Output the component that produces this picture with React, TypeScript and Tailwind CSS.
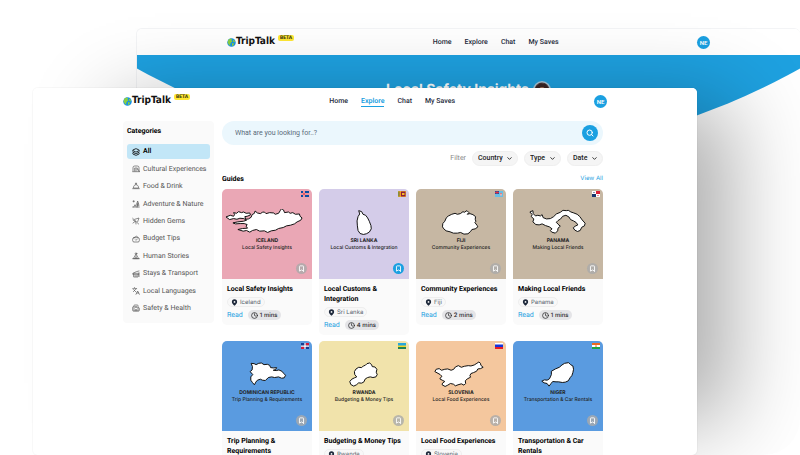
import type { ReactNode } from "react";
import {
  Bookmark,
  ChevronDown,
  Clock,
  Hospital,
  Languages,
  Layers,
  Search,
} from "lucide-react";

const line = {
  viewBox: "0 0 24 24",
  fill: "none",
  stroke: "currentColor",
  strokeWidth: 2,
  strokeLinecap: "round" as const,
  strokeLinejoin: "round" as const,
};

function Drawn({ children }: { children: ReactNode }) {
  return (
    <svg {...line} className="size-2 shrink-0" aria-hidden="true">
      {children}
    </svg>
  );
}

const categories: { name: string; icon: ReactNode }[] = [
  { name: "All", icon: <Layers className="size-2 shrink-0" strokeWidth={2.5} /> },
  {
    name: "Cultural Experiences",
    icon: (
      <Drawn>
        <path d="M3 18V8a5 5 0 0 1 5-5h8a5 5 0 0 1 5 5v10" />
        <path d="M8 18V9h8v6M12 12v6M2 20h20M19 14l3 6" />
      </Drawn>
    ),
  },
  {
    name: "Food & Drink",
    icon: (
      <Drawn>
        <path d="M2 20h20M4 17c0-5 4-9 8-9s8 4 8 9zM12 8V4M10 4h4" />
      </Drawn>
    ),
  },
  {
    name: "Adventure & Nature",
    icon: (
      <Drawn>
        <path d="M2 21h20M3 4h4M5 2v4M5 21l4-7 4 7M17 21V9M14 12l3-9 3 9zM14 16h7" />
      </Drawn>
    ),
  },
  {
    name: "Hidden Gems",
    icon: (
      <Drawn>
        <path d="M2 4l18 17M8 7l13-4-4 11M3 18l8-6 1 9M3 9l5 3" />
      </Drawn>
    ),
  },
  {
    name: "Budget Tips",
    icon: (
      <Drawn>
        <rect x="2" y="8" width="20" height="13" rx="4" />
        <path d="M6 8l8-5 4 5M10 14l2 2 4-4" />
      </Drawn>
    ),
  },
  {
    name: "Human Stories",
    icon: (
      <Drawn>
        <circle cx="12" cy="5" r="2.5" />
        <path d="M11 8L4 20h16L13 8M12 12v4M9 20l3-4 3 4M2 20h20" />
      </Drawn>
    ),
  },
  {
    name: "Stays & Transport",
    icon: (
      <Drawn>
        <path d="M3 10l10-5 8-2M4 10h16v4H4zM5 14v7h13v-7M9 18h5M21 8v12" />
      </Drawn>
    ),
  },
  { name: "Local Languages", icon: <Languages className="size-2 shrink-0" /> },
  { name: "Safety & Health", icon: <Hospital className="size-2 shrink-0" /> },
];

type Guide = {
  country: string;
  title: string;
  mins: number;
  color: string;
  saved?: boolean;
  shift: string;
  outline: string;
  flag: ReactNode;
};

const guides: Guide[] = [
  {
    country: "Iceland",
    title: "Local Safety Insights",
    mins: 1,
    color: "bg-[#eaa7b5]",
    shift: "translate(-12 -15)",
    outline:
      "M24 99l13-5 10 3 3-5-3-6 9 2 6-5 9 3 6-2 8 4 11-1 2 6-10 4-7 1 3 8 8-1 8-5 3-8 7-4 2-7 7 6 9 2 6-4 6-1 5 5 11-3 12 1 5 4 10-3 5-8 4-6 6 4 3 8 12-2 5 4 8-2 8 5 12-1 2 7 6 5-4 7-11 5-8 6-12 4-12 2-10 5-14 3-9 5-13 2-11 5-10-5-14 1-10-5-12 3-8 5-10-5-10 2-16-5 14-3 15-1-4-6 3-5-9-3-12 0-14 1-8-3 14-3 18-2 9-3-8-5-12-1-9 3-10-2-12 3z",
    flag: (
      <>
        <path fill="#0b4ea2" d="M0 0h16v12H0z" />
        <path stroke="#fff" strokeWidth="4" d="M0 6h16M6 0v12" />
        <path stroke="#dc2235" strokeWidth="2" d="M0 6h16M6 0v12" />
      </>
    ),
  },
  {
    country: "Sri Lanka",
    title: "Local Customs & Integration",
    mins: 4,
    color: "bg-[#d4cce9]",
    saved: true,
    shift: "translate(-303 -15)",
    outline:
      "M423 80l9 3 4 8 8 3 6 8 5 10 5 13 1 10-6 10-9 5-9 2-10-3-6-9-2-14-1-15 3-13 5-8z",
    flag: (
      <>
        <path fill="#f5b928" d="M0 0h16v12H0z" />
        <path fill="#176b52" d="M1 1h2v10H1z" />
        <path fill="#e87722" d="M3 1h2v10H3z" />
        <path fill="#8d1b3d" d="M6 1h9v10H6z" />
        <path fill="#f5b928" d="M8 4h5v4H8z" />
      </>
    ),
  },
  {
    country: "Fiji",
    title: "Community Experiences",
    mins: 2,
    color: "bg-[#c6b7a3]",
    shift: "translate(-12 -15)",
    outline:
      "M104 101l6-5 10-5 10-3 7 3 9-2 8-6 4 2 8-5 6 6-5 5 8-2 9 3 8 6-1 8 2 6-3 4 7 9 2 4-8 6-10 2-4 6-8 7-12 1-10-5-10 2-12 0-10-4-12-3-7-6-4-6 1-10 6-7z",
    flag: (
      <>
        <path fill="#68bfe5" d="M0 0h16v12H0z" />
        <path fill="#2a4b9b" d="M0 0h8v6H0z" />
        <path stroke="#d8344b" strokeWidth="2" d="M0 3h8M4 0v6" />
        <path fill="#e8d9d3" d="M10 4h4v5h-4z" />
        <path stroke="#d8344b" d="M10 5h4M12 5v4" />
      </>
    ),
  },
  {
    country: "Panama",
    title: "Making Local Friends",
    mins: 1,
    color: "bg-[#c6b7a3]",
    shift: "translate(-301 -15)",
    outline:
      "M352 84l9-4 1 9 7 7 7-2 8 2 5-4 3 9 10 4 12-1 10-6 8-8 12-5 8-6 10 1 6-1 8 5 9 3 10 4 8 7 7 10 9 10-2 8-8 4-5 10-8 3-8-4-5-7 6-5 8-4-5-7-8-5-9-4-5-8-9-5-10 3-6 8-8 5-5 5 5 6 7 6-7 6-1 8-7 7-11-3-4-5 5-5-8-6-12-4-10-5-9 3-10-1-9-8 3-9-8-7 3-6z",
    flag: (
      <>
        <path fill="#fff" d="M0 0h16v12H0z" />
        <path fill="#dc1f35" d="M8 0h8v6H8z" />
        <path fill="#15346f" d="M0 6h8v6H0zM3 2h2v2H3z" />
        <path fill="#dc1f35" d="M11 8h2v2h-2z" />
      </>
    ),
  },
  {
    country: "Dominican Republic",
    title: "Trip Planning & Requirements",
    mins: 3,
    color: "bg-[#5a9be0]",
    shift: "translate(-12 -15)",
    outline:
      "M100 82l9 1 6 3 8-4 8-1 8 5 10-1 7 3 3 7 9 1 9-1-3 6-7 2 9 1 8-2 9 4 5 6 6 6-4 8-8 1-9-4-12 2-9-2-10 2-9 9-9-1-6-3-9 3-5 6-4 8-6-7-5-7 0-10 6-7-8-9 6-5 1-10z",
    flag: (
      <>
        <path fill="#173b8f" d="M0 0h16v12H0z" />
        <path fill="#d21c3b" d="M9 0h7v5H9zM0 7h7v5H0z" />
        <path stroke="#fff" strokeWidth="2.5" d="M0 6h16M8 0v12" />
      </>
    ),
  },
  {
    country: "Rwanda",
    title: "Budgeting & Money Tips",
    mins: 2,
    color: "bg-[#f1e3ab]",
    shift: "translate(-303 -15)",
    outline:
      "M456 81l6 5 2 6 8 1 6 7-2 9 3 7-4 7-9 2-8-2-8 2-7 4-5 10-7 3-8-1-7 6-8 4-9-5-3-9 6-7 8-4 7-3-6-7-1-9 5-8 8-5 9 1 5-5 6-2 5-5z",
    flag: (
      <>
        <path fill="#27a7dc" d="M0 0h16v6H0z" />
        <path fill="#f4d526" d="M0 5h16v4H0z" />
        <path fill="#218353" d="M0 8h16v4H0z" />
      </>
    ),
  },
  {
    country: "Slovenia",
    title: "Local Food Experiences",
    mins: 2,
    color: "bg-[#f4c79e]",
    shift: "translate(-12 -15)",
    outline:
      "M69 107l4-7 9-2 7 5 10-3 9-1 10 4 8-3 5-7 9-4 9 5 9-3 12-2 8 1 10-3 8-5 6-4 5 4 1 6 7 6-8 4-8 1-4 7-9 4-8 3-3 6 2 5-10 5-6 6 1 8-5 5-8-4-10 3-8 3-6-5-9-2-8 5-8 4-9-5 1-5 7-5-6-3-9-5 6-8-5-5z",
    flag: (
      <>
        <path fill="#fff" d="M0 0h16v4H0z" />
        <path fill="#1534d8" d="M0 3h16v6H0z" />
        <path fill="#e81c24" d="M0 8h16v4H0z" />
      </>
    ),
  },
  {
    country: "Niger",
    title: "Transportation & Car Rentals",
    mins: 3,
    color: "bg-[#5a9be0]",
    shift: "translate(-301 -15)",
    outline:
      "M417 106l12-7 12-5 8-7 8-5 12-2 6 6 7 4 2 10-2 10-3 9-5 6-6 10-9 4-9 1-11-2-8 0-10-1-5 6-6 8-6-8-9-2-7-5 8-4 8 1 7-4 3-6 3-7z",
    flag: (
      <>
        <path fill="#ed6a1f" d="M0 0h16v4H0z" />
        <path fill="#fff" d="M0 4h16v4H0z" />
        <path fill="#1da446" d="M0 8h16v4H0z" />
        <circle cx="8" cy="6" r="1.7" fill="#ed6a1f" />
      </>
    ),
  },
];

function Logo() {
  return (
    <a href="#home" className="flex items-start gap-[3px]">
      <span className="flex items-center">
        <svg viewBox="0 0 18 18" className="size-[9px]" aria-hidden="true">
          <circle cx="9" cy="9" r="8.5" fill="#1592e6" />
          <path
            fill="#8bcf3f"
            d="M3 3l4-2 3 1-1 3 2 2-3 2-2 4 1 3-3-2-3-5zM12 3l4 3-1 3-3-2zM10 10l4 1-1 4-3 1z"
          />
        </svg>
        <span className="font-['DejaVu_Sans_Condensed','DejaVu_Sans',sans-serif] text-[10px] leading-[14px] font-bold text-[#111111]">
          TripTalk
        </span>
      </span>
      <span className="rounded-xs bg-[#ffe733] px-[2px] text-[5px] leading-[6px] font-bold text-[#2b2b10]">
        BETA
      </span>
    </a>
  );
}

function TopBar({ active }: { active?: string }) {
  return (
    <header className="flex h-[26px] shrink-0 items-center justify-between bg-white px-[90px]">
      <Logo />
      <nav className="flex gap-[13px] text-[7px] leading-[10px] font-medium text-[#1f2d3d]">
        {["Home", "Explore", "Chat", "My Saves"].map((item) => (
          <a
            key={item}
            href="#nav"
            className={
              item === active
                ? "border-b border-[#1ba0e1] font-semibold text-[#1ba0e1]"
                : "border-b border-transparent"
            }
          >
            {item}
          </a>
        ))}
      </nav>
      <button className="size-[13px] rounded-full bg-[#1ba0e1] text-center text-[6px] leading-[13px] font-semibold text-white">
        NE
      </button>
    </header>
  );
}

function ArticleWindow() {
  return (
    <section className="col-start-1 row-start-1 mt-7 ml-[17%] overflow-hidden rounded-t-md border-t border-l border-gray-100 bg-white">
      <TopBar />
      <div className="h-25 bg-[#1ea1e0] [clip-path:circle(678px_at_50%_-578px)]">
        <div className="flex items-center justify-center gap-1 pt-[25px]">
          <h1 className="font-['Inter',sans-serif] text-[14px] leading-[20px] font-bold text-white">
            Local Safety Insights
          </h1>
          <svg viewBox="0 0 18 18" className="size-[18px]" aria-hidden="true">
            <circle cx="9" cy="9" r="9" fill="#a9c9dc" />
            <circle cx="9" cy="9" r="7.5" fill="#5d4545" />
            <path fill="#3a2526" d="M3 8q-1-3 2-4 2-3 5-1 3-1 4 2 3 2 0 5H3z" />
            <ellipse cx="9" cy="11" rx="4" ry="5" fill="#a8745d" />
          </svg>
        </div>
      </div>
    </section>
  );
}

function Sidebar() {
  return (
    <aside className="flex h-[202px] w-[91px] shrink-0 flex-col rounded bg-[#fafafa] px-1 pt-[5px] pb-[7px]">
      <h2 className="text-[7px] leading-[10px] font-bold text-black">Categories</h2>
      <ul className="mt-2 flex flex-1 flex-col justify-between">
        {categories.map(({ name, icon }, i) => (
          <li key={name}>
            <a
              href="#category"
              className={
                i === 0
                  ? "flex h-[15px] items-center gap-[3px] rounded-[3px] bg-[#c2e6f7] px-[5px] text-[7px] font-semibold text-black"
                  : "flex h-[15px] items-center gap-[3px] px-[5px] text-[7px] whitespace-nowrap text-[#555555]"
              }
            >
              {icon}
              {name}
            </a>
          </li>
        ))}
      </ul>
    </aside>
  );
}

function Filter({ name }: { name: string }) {
  return (
    <div className="relative flex">
      <select
        aria-label={name}
        className="h-[15px] appearance-none rounded-full border border-[#efefef] bg-[#f5f5f5] pr-[14px] pl-[5px] text-[7px] leading-[9px] font-medium text-[#222222]"
      >
        <option>{name}</option>
      </select>
      <ChevronDown
        className="pointer-events-none absolute top-1 right-[5px] size-[7px] text-[#222222]"
        strokeWidth={3}
      />
    </div>
  );
}

function GuideCard({ guide }: { guide: Guide }) {
  return (
    <article className="overflow-hidden rounded-[5px] bg-[#fafafa]">
      <div
        className={`relative aspect-square pt-5 text-center font-['Inter',sans-serif] text-[5px] leading-[7px] text-[#222222] ${guide.color}`}
      >
        <svg viewBox="0 60 272 84" className="block w-full" aria-hidden="true">
          <path
            d={guide.outline}
            transform={guide.shift}
            fill="#ffffff"
            stroke="#111111"
            strokeWidth="3"
            strokeLinejoin="round"
          />
        </svg>
        <p className="mt-px font-bold uppercase">{guide.country}</p>
        <p className="font-medium whitespace-nowrap">{guide.title}</p>
        <svg viewBox="0 0 16 12" className="absolute top-[2px] right-[3px] h-[6px] w-[8px]" aria-hidden="true">
          {guide.flag}
        </svg>
        <button
          aria-label="Save"
          className={
            guide.saved
              ? "absolute right-[5px] bottom-[5px] flex size-[11px] items-center justify-center rounded-full bg-[#1ba0e1] text-white"
              : "absolute right-[5px] bottom-[5px] flex size-[11px] items-center justify-center rounded-full bg-[#aaaaaa]/80 text-white"
          }
        >
          <Bookmark className="size-[7px]" strokeWidth={3} />
        </button>
      </div>
      <div className="flex flex-col items-start gap-[3px] p-[5px]">
        <h3 className="text-[7px] leading-[10px] font-bold text-black">{guide.title}</h3>
        <p className="flex h-[10px] items-center gap-[2px] rounded-full border border-[#eeeeee] bg-[#f8f8f8] px-[3px] font-['Inter',sans-serif] text-[6px] text-[#555f6b]">
          <svg viewBox="0 0 24 24" className="size-[7px]" aria-hidden="true">
            <path
              fill="#1e293b"
              fillRule="evenodd"
              d="M12 1a9 9 0 0 1 9 9c0 5-5 10-9 13-4-3-9-8-9-13a9 9 0 0 1 9-9zm0 6a3 3 0 1 0 0 6 3 3 0 0 0 0-6z"
            />
          </svg>
          {guide.country}
        </p>
        <div className="flex items-center gap-[5px]">
          <a href="#read" className="text-[7px] leading-[10px] text-[#1ba0e1]">
            Read
          </a>
          <span className="flex h-[10px] items-center gap-[2px] rounded-full bg-[#e4e4e7] px-[3px] font-['Inter',sans-serif] text-[6px] font-medium text-[#27272a]">
            <Clock className="size-[7px]" strokeWidth={2.5} />
            {guide.mins} mins
          </span>
        </div>
      </div>
    </article>
  );
}

function ExploreWindow() {
  return (
    <section className="z-10 col-start-1 row-start-1 mt-[88px] ml-[33px] flex w-[83%] flex-col overflow-hidden rounded-[5px] bg-white shadow-[0_0_1px_1px_rgba(0,0,0,0.03),58px_-8px_80px_-24px_rgba(0,0,0,0.32)]">
      <TopBar active="Explore" />
      <div className="flex items-start gap-2 pt-[7px] pr-[94px] pl-[90px]">
        <Sidebar />
        <main className="min-w-0 flex-1">
          <form className="flex h-6 items-center rounded-full bg-[#ebf7fd] pr-[5px] pl-[13px]">
            <input
              type="search"
              aria-label="Search"
              placeholder="What are you looking for..?"
              className="min-w-0 flex-1 bg-transparent text-[7px] leading-[10px] placeholder:text-[#5a6b7a]"
            />
            <button
              aria-label="Search"
              className="flex size-4 items-center justify-center rounded-full bg-[#1ba0e1] text-white"
            >
              <Search className="size-2" strokeWidth={3} />
            </button>
          </form>
          <div className="mt-[6px] flex items-center justify-end gap-[6px] text-[7px] text-[#888888]">
            Filter
            <Filter name="Country" />
            <Filter name="Type" />
            <Filter name="Date" />
          </div>
          <div className="mt-2 flex items-center justify-between leading-[10px]">
            <h2 className="text-[7px] font-bold text-black">Guides</h2>
            <a href="#all" className="font-['Inter',sans-serif] text-[6px] text-[#1ba0e1]">
              View All
            </a>
          </div>
          <div className="mt-[5px] grid grid-cols-4 items-start gap-x-[7px] gap-y-[6px]">
            {guides.map((guide) => (
              <GuideCard key={guide.country} guide={guide} />
            ))}
          </div>
        </main>
      </div>
    </section>
  );
}

export default function App() {
  return (
    <div className="h-screen bg-white font-['Roboto',sans-serif] [text-rendering:geometricPrecision]">
      <div className="grid h-full grid-cols-1 grid-rows-[minmax(0,1fr)] overflow-hidden rounded-br-[36px]">
        <ArticleWindow />
        <ExploreWindow />
      </div>
    </div>
  );
}
